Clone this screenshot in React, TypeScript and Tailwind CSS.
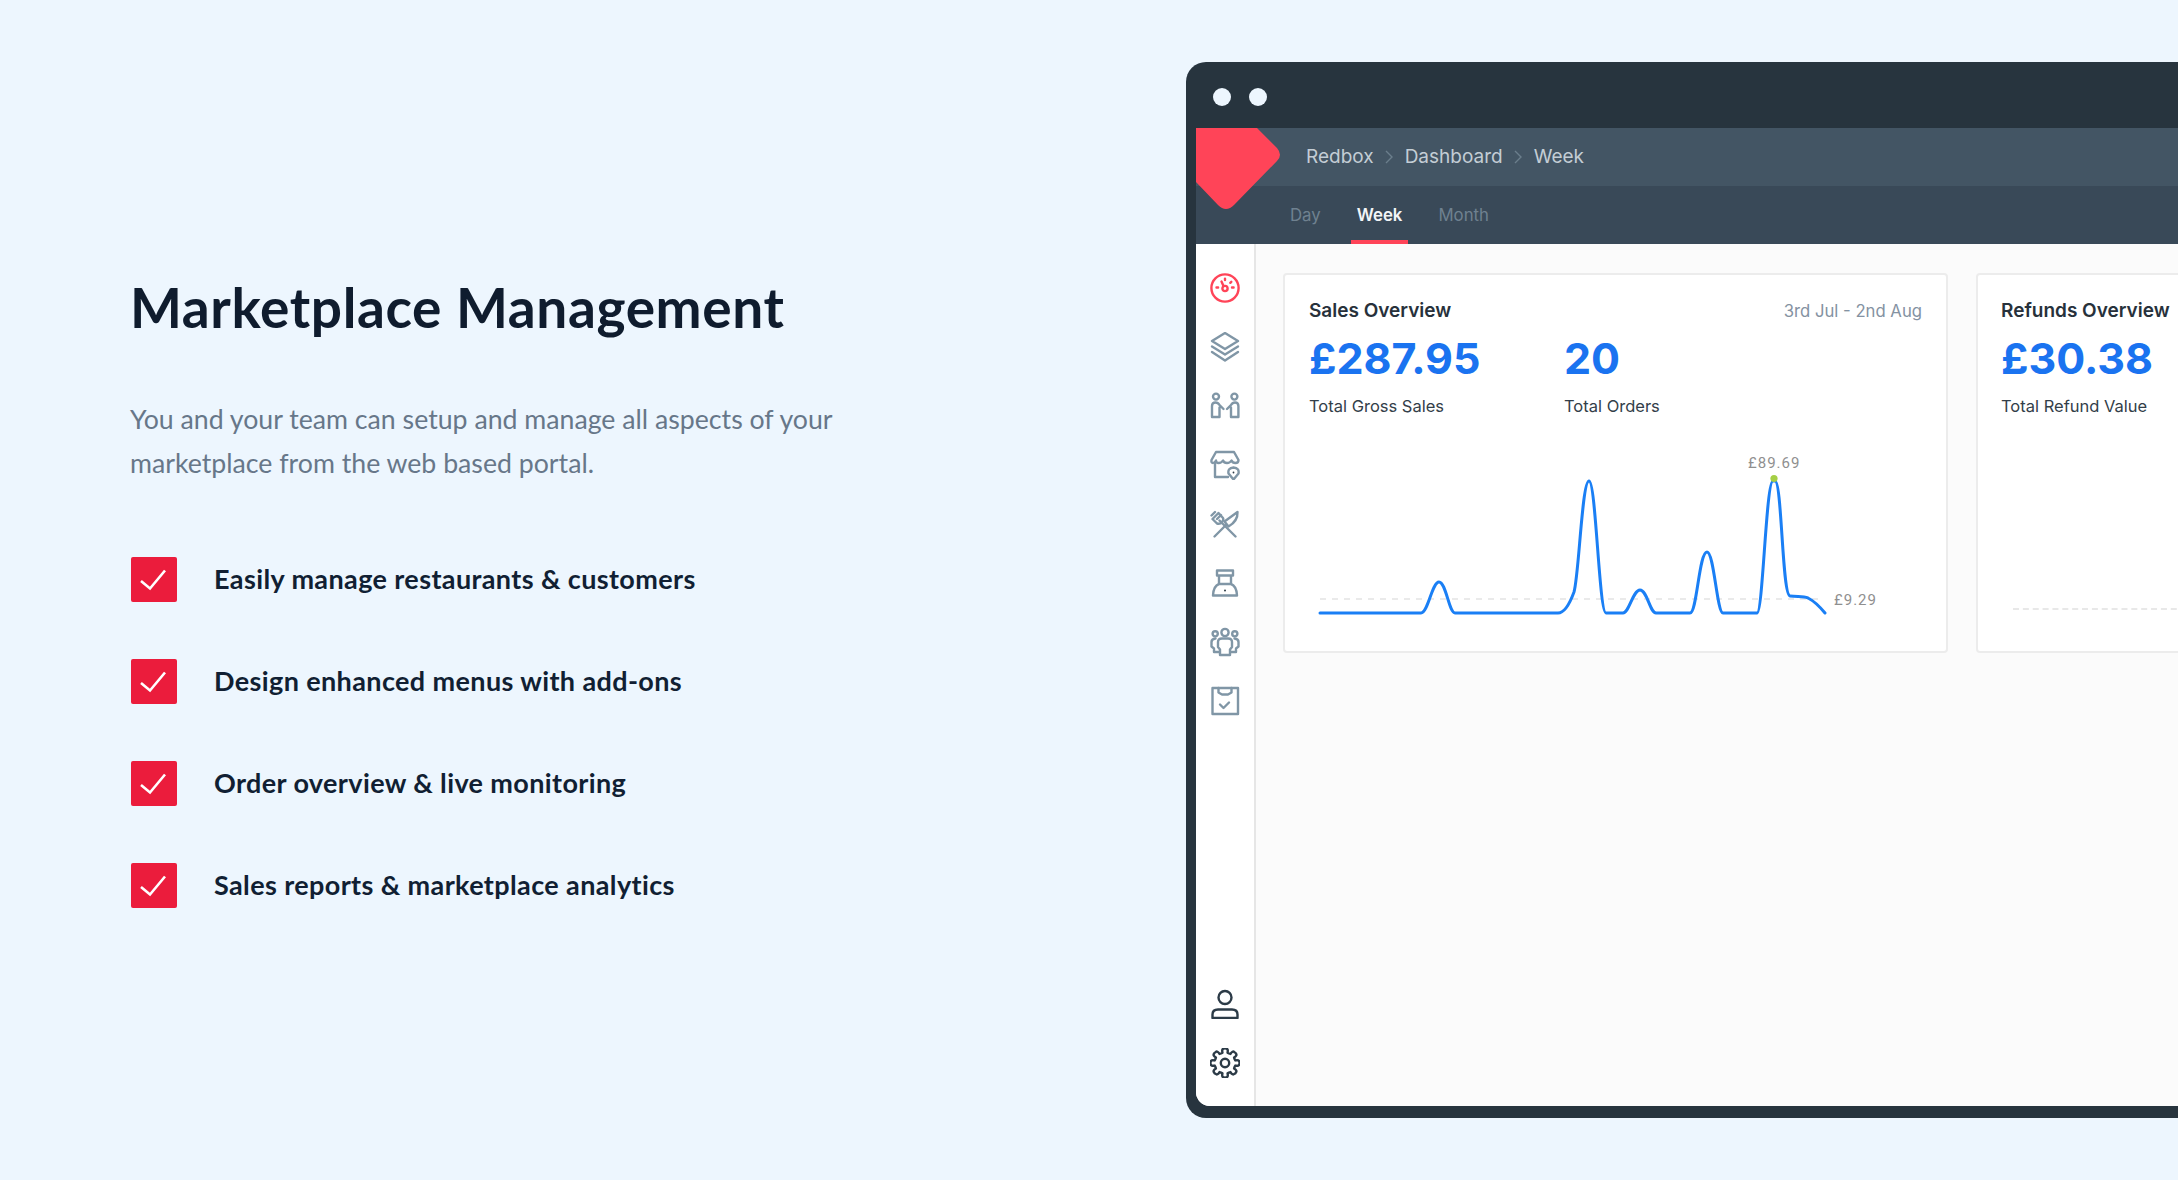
import { Fragment } from "react";

const items = [
  "Easily manage restaurants & customers",
  "Design enhanced menus with add-ons",
  "Order overview & live monitoring",
  "Sales reports & marketplace analytics",
];

function Icon({ color = "#8096a6", children }: { color?: string; children: React.ReactNode }) {
  return (
    <svg width="30" height="30" viewBox="0 0 30 30" fill="none" stroke={color} strokeWidth="2.4" strokeLinecap="round" strokeLinejoin="round">
      {children}
    </svg>
  );
}

// 8 tooth gear, easier to compute than to write out by hand
function gearPath() {
  const cx = 15;
  const cy = 15;
  const pts: string[] = [];
  for (let i = 0; i < 8; i++) {
    const a = (i * Math.PI) / 4 - Math.PI / 2;
    const d = Math.PI / 8;
    const p = (r: number, t: number) => `${(cx + r * Math.cos(t)).toFixed(2)} ${(cy + r * Math.sin(t)).toFixed(2)}`;
    pts.push(`${i === 0 ? "M" : "L"}${p(10.6, a - d * 0.62)}`);
    pts.push(`Q${p(14.6, a - d * 0.6)} ${p(14.4, a - d * 0.2)}`);
    pts.push(`Q${p(14.9, a)} ${p(14.4, a + d * 0.2)}`);
    pts.push(`Q${p(14.6, a + d * 0.6)} ${p(10.6, a + d * 0.62)}`);
    pts.push(`Q${p(10.2, a + d)} ${p(10.6, a + d * 1.38)}`);
  }
  return pts.join(" ") + "Z";
}

const navIcons = [
  <Icon color="#ff4458" key="gauge">
    <circle cx="15" cy="15" r="13.6" strokeWidth="2.4" />
    <circle cx="15" cy="15.5" r="2.6" />
    <path d="M13.6 13.2 11.5 8.5M15 5.6v1.4M6.5 14.5h1.6M22 14.5h1.6M21.3 8.8l-1 1" />
  </Icon>,
  <Icon key="layers">
    <path d="M15 1 28 9 15 17 2 9Z" />
    <path d="M2 14.5 15 22.5 28 14.5" />
    <path d="M2 20 15 28.5 28 20" />
  </Icon>,
  <Icon key="people">
    <circle cx="6" cy="5.6" r="3" />
    <circle cx="24.4" cy="5.6" r="3" />
    <path d="M2 26V15Q2 11.5 5.5 11.5 8 11.5 9.5 14L13.5 18M2 26H9.5V16.5" />
    <path d="M28.4 26V15Q28.4 11.5 25 11.5 22.5 11.5 21 14L17 18M28.4 26H21V16.5" />
  </Icon>,
  <Icon key="store">
    <path d="M6 2H24L28.5 10Q28.5 13 25.5 13 22.5 13 21.5 10.5 20 13 17 13 14 13 13 10.5 11.5 13 8.5 13 6 13 6 10.5 4.5 13 3 13 1 13 1.5 10Z" />
    <path d="M5 14V27H18" />
    <path d="M23.5 29.5 18.5 23.5Q17.5 18 23.5 17.5 29.5 18 28.5 23.5Z" fill="#fff" />
    <circle cx="23.5" cy="22.5" r="0.9" fill="#2c3b47" stroke="none" />
  </Icon>,
  <Icon key="utensils">
    <path d="M25.5 27.5 9.5 11.5M8.5 4 2.5 10 7 14.5Q10 15.5 12 13 14 11 13 9ZM5 3 1.5 6.5M11 6 7 10" />
    <path d="M4.5 27.5 16 16M14.5 12.5 27.5 3Q28 12 18.5 17.5Z" />
  </Icon>,
  <Icon key="chef">
    <path d="M7 2.5H23V7.5H7ZM9 7.5V15.5M21 7.5V15.5" />
    <path d="M3 27.5H27Q26.5 18 21 16H9Q3.5 18 3 27.5Z" />
    <circle cx="15" cy="22.5" r="1" fill="#2c3b47" stroke="none" />
  </Icon>,
  <Icon key="team">
    <circle cx="15" cy="5.5" r="3.6" />
    <circle cx="5.2" cy="6.8" r="2.6" />
    <circle cx="24.8" cy="6.8" r="2.6" />
    <path d="M10 28V22.5L8 20V15Q8 11.5 12 11.5H18Q22 11.5 22 15V20L20 22.5V28Z" />
    <path d="M5.5 11.5Q1.5 12 1.5 15V19.5L4 21.5V25H9M24.5 11.5Q28.5 12 28.5 15V19.5L26 21.5V25H21" />
  </Icon>,
  <Icon key="clipboard">
    <path d="M8.5 2H2.5V28H28V2H21.5V6.5L18 8.5H12L8.5 6.5Z" />
    <path d="M8.5 2H21.5" />
    <path d="M10 18.5 13.5 22 19 16.5" />
  </Icon>,
];

const userIcons = [
  <Icon color="#2c3b47" key="user">
    <circle cx="15" cy="8.5" r="6.5" />
    <path d="M2.5 29V25.5Q2.5 20.5 8 20.5H22Q27.5 20.5 27.5 25.5V29Z" />
  </Icon>,
  <Icon color="#2c3b47" key="gear">
    <path d={gearPath()} />
    <circle cx="15" cy="15" r="4.2" />
  </Icon>,
];

function Chevron() {
  return (
    <svg width="8" height="14" viewBox="0 0 8 14" fill="none" stroke="#6b7e8c" strokeWidth="1.4">
      <path d="M1 1 7 7 1 13" />
    </svg>
  );
}

function Chart() {
  return (
    <svg width="640" height="190" viewBox="1300 450 640 190" className="ml-[15px] mt-[32px] block" fill="none">
      <path d="M1320 599H1823" stroke="#e3e3e3" strokeWidth="1.4" strokeDasharray="6 6" />
      <path
        d="M1320 613H1421C1428 613 1432 582 1439 582C1446 582 1449 613 1455 613H1558C1565 613 1570 603 1574 592C1579 575 1582 481 1589 481C1596 481 1599 613 1606 613H1623C1629 613 1633 590 1640 590C1647 590 1650 613 1656 613H1690C1697 613 1699 552 1707 552C1714 552 1717 613 1723 613H1757C1763 613 1766 481 1773 481H1775C1782 481 1782 595 1790 596C1798 597 1803 596 1808 598C1814 601 1820 607 1825 613"
        stroke="#1a7ff5"
        strokeWidth="3"
        strokeLinecap="round"
        strokeLinejoin="round"
      />
      <circle cx="1774" cy="478.5" r="3.6" fill="#a5cf45" />
      <text x="1748" y="468" fontSize="15" fill="#8f8f8f" letterSpacing="1" fontFamily="Roboto, sans-serif">£89.69</text>
      <text x="1834" y="604.5" fontSize="15" fill="#8f8f8f" letterSpacing="1" fontFamily="Roboto, sans-serif">£9.29</text>
    </svg>
  );
}

export default function App() {
  return (
    <div className="flex h-[1180px] w-[2178px] overflow-hidden bg-[#edf6fe]">
      <div className="w-[1186px] shrink-0 pl-[131px] pt-[277px] font-['Lato',sans-serif]">
        <h1 className="-ml-[1px] text-[55px] leading-[60px] font-bold tracking-[0.6px] text-[#0f1c2e]">Marketplace Management</h1>
        <p className="-ml-[1px] mt-[60px] text-[26.7px] leading-[44px] text-[#677789]">
          You and your team can setup and manage all aspects of your
          <br />
          marketplace from the web based portal.
        </p>
        <ul className="mt-[72px] flex flex-col gap-[57px]">
          {items.map((item) => (
            <li key={item} className="flex h-[45px] items-center gap-[37px]">
              <span className="flex h-[45px] w-[46px] shrink-0 rounded-[2px] bg-[#eb1c3c]">
                <svg width="45" height="45" viewBox="0 0 45 45" fill="none" stroke="#fff" strokeWidth="2.6">
                  <path d="M10 24 19 31.5 34 13.5" />
                </svg>
              </span>
              <span className="text-[27px] font-bold tracking-[0.38px] text-[#111f33]">{item}</span>
            </li>
          ))}
        </ul>
      </div>

      <div className="mt-[62px] h-[1056px] w-[1200px] shrink-0 rounded-l-[20px] bg-[#27343e] pb-[12px] pl-[10px] font-['Inter',sans-serif]">
        <div className="relative flex h-full flex-col">
          <div className="flex h-[66px] shrink-0 items-center gap-[18px] pl-[17px] pt-[3px]">
            <span className="h-[18px] w-[18px] rounded-full bg-[#edf6fe]" />
            <span className="h-[18px] w-[18px] rounded-full bg-[#edf6fe]" />
          </div>

          <div className="flex h-[58px] shrink-0 items-center bg-[#435564] pl-[110px] text-[19px] text-[#c3cdd5]">
            {["Redbox", "Dashboard", "Week"].map((crumb, i) => (
              <Fragment key={crumb}>
                {i > 0 && (
                  <span className="mx-[11.5px] flex">
                    <Chevron />
                  </span>
                )}
                <span>{crumb}</span>
              </Fragment>
            ))}
          </div>

          <div className="flex h-[58px] shrink-0 items-stretch gap-[22px] bg-[#394958] pl-[86px] text-[16.8px] text-[#6f8190]">
            <span className="flex items-center px-[8px] pt-[2px]">Day</span>
            <span className="flex items-center border-b-4 border-[#ff4458] px-[6px] pt-[6px] font-semibold text-[#f2f5f7]">Week</span>
            <span className="flex items-center px-[8px] pt-[2px]">Month</span>
          </div>

          <svg width="86" height="82" viewBox="0 0 86 82" className="absolute left-0 top-[66px]">
            <path d="M0 0H61L81 20Q87 27 81 33L38 77Q30 85 22 77L0 54Z" fill="#ff4458" />
          </svg>

          <div className="flex min-h-0 flex-1 overflow-hidden rounded-bl-[14px] bg-[#fbfbfb]">
            <aside className="flex w-[60px] shrink-0 flex-col items-center justify-between border-r-2 border-[#e6e6e6] bg-white pb-[28px] pt-[29px]">
              <div className="flex flex-col gap-[29px]">{navIcons}</div>
              <div className="flex flex-col gap-[29px]">{userIcons}</div>
            </aside>

            <div className="flex items-start gap-[28px] pl-[27px] pt-[29px]">
              <section className="h-[380px] w-[665px] shrink-0 rounded-[4px] border-2 border-[#ececec] bg-white pt-[22px]">
                <div className="flex items-center justify-between px-[24px] leading-[28px]">
                  <h2 className="text-[19px] font-semibold text-[#27313b]">Sales Overview</h2>
                  <span className="text-[16.7px] text-[#8492a2]">3rd Jul - 2nd Aug</span>
                </div>
                <div className="mt-[8px] flex px-[24px]">
                  <div className="w-[255px]">
                    <div className="text-[43px] leading-[50px] font-bold text-[#1a73f0]">£287.95</div>
                    <div className="mt-[11px] text-[16.5px] leading-[24px] text-[#333e49]">Total Gross Sales</div>
                  </div>
                  <div>
                    <div className="text-[43px] leading-[50px] font-bold text-[#1a73f0]">20</div>
                    <div className="mt-[11px] text-[16.5px] leading-[24px] text-[#333e49]">Total Orders</div>
                  </div>
                </div>
                <Chart />
              </section>

              <section className="relative h-[380px] w-[400px] shrink-0 rounded-[4px] border-2 border-[#ececec] bg-white pl-[23px] pt-[22px]">
                <h2 className="text-[19px] leading-[28px] font-semibold text-[#27313b]">Refunds Overview</h2>
                <div className="mt-[8px] text-[43px] leading-[50px] font-bold text-[#1a73f0]">£30.38</div>
                <div className="mt-[11px] text-[16.5px] leading-[24px] text-[#333e49]">Total Refund Value</div>
                <div className="ml-[12px] mt-[190px] border-t-2 border-dashed border-[#e8e8e8]" />
              </section>
            </div>
          </div>
        </div>
      </div>
    </div>
  );
}
